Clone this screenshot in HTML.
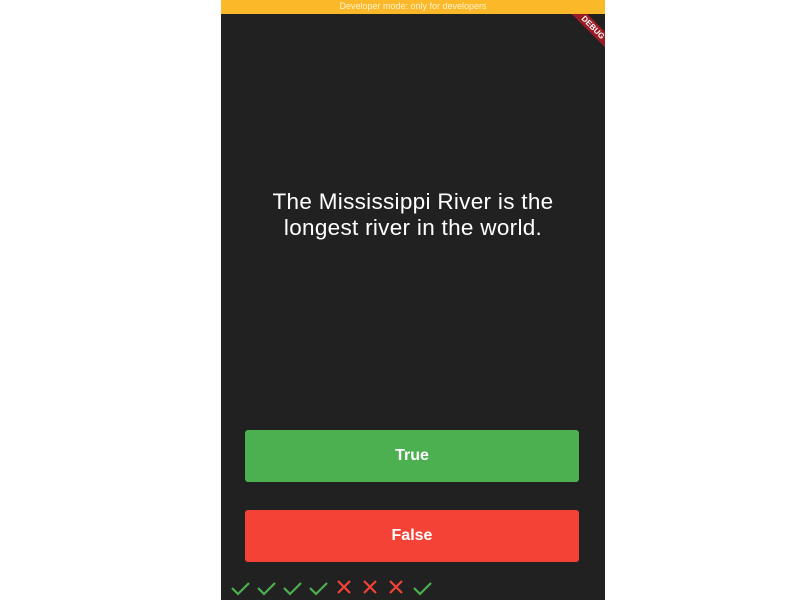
<!DOCTYPE html><html><head><style>
body{margin:0;width:800px;height:600px;background:#fff;position:relative;overflow:hidden;font-family:"Liberation Sans",sans-serif}
#app{position:absolute;left:221px;top:0;width:384px;height:600px;background:#212121;overflow:hidden}
#bar{position:absolute;left:0;top:0;width:384px;height:14px;background:#fbb829;color:#fff4d0;font-size:9px;text-align:center;line-height:13px;z-index:2}
#q{position:absolute;left:0;top:189px;width:384px;text-align:center;color:#fff;font-size:22.5px;line-height:26px;letter-spacing:0.3px}
.btn{position:absolute;left:24px;width:334px;height:52px;border-radius:3px;color:#fff;font-weight:bold;font-size:16px;text-align:center;line-height:52px}
#ribbon{position:absolute;right:-28px;top:22px;width:80px;height:11px;background:#9b1c25;transform:rotate(45deg);color:#fff;font-size:8px;font-weight:bold;text-align:center;line-height:11px}
</style></head><body><div id="app">
<div id="bar">Developer mode: only for developers</div>
<div id="ribbon">DEBUG</div>
<div id="q">The Mississippi River is the<br>longest river in the world.</div>
<div class="btn" style="top:430px;background:#4caf50">True</div>
<div class="btn" style="top:510px;background:#f44336">False</div>
<svg style="position:absolute;left:0;top:576px" width="384" height="24" fill="none" stroke-width="2.2">
<g stroke="#4caf50"><path d="M11 12l6 6 11-11"/><path d="M37 12l6 6 11-11"/><path d="M63 12l6 6 11-11"/><path d="M89 12l6 6 11-11"/><path d="M193 12l6 6 11-11"/></g>
<g stroke="#f44336"><path d="M117 5l12 12M129 5l-12 12"/><path d="M143 5l12 12M155 5l-12 12"/><path d="M169 5l12 12M181 5l-12 12"/></g>
</svg>
</div></body></html>
